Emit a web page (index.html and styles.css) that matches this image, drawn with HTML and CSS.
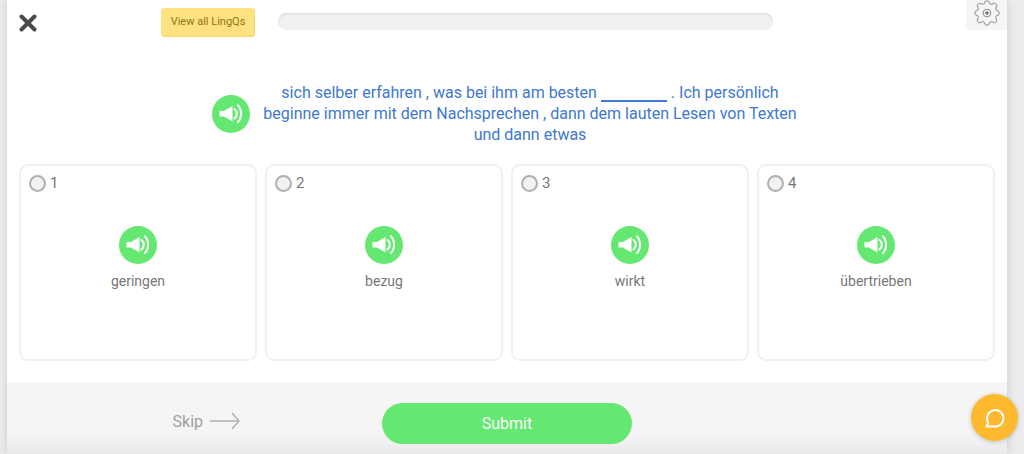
FILE: index.html
```html
<!DOCTYPE html>
<html lang="de">
<head>
  <meta charset="utf-8">
  <meta name="viewport" content="width=device-width, initial-scale=1">
  <title>LingQ Review</title>
  <link rel="stylesheet" href="styles.css">
</head>
<body>
  <svg class="sprite" aria-hidden="true">
    <symbol id="speaker" viewBox="0 0 38 38">
      <path fill="#fff" d="M7.500 16h4.500l8.500-5v15.500L12 21.500H7.500z"/>
      <path fill="none" stroke="#fff" stroke-width="2" stroke-linecap="round" d="M22.500 14q2.300 1.500 2.300 4.700t-2.300 4.700M25.800 10.300q3.200 3 3.200 8.400t-3.200 8.400"/>
    </symbol>
  </svg>

  <div class="review">
    <header class="topbar">
      <button class="close" type="button" aria-label="Close">
        <svg viewBox="0 0 18 18"><path d="M2.500 2.500l13 13M15.500 2.500l-13 13"/></svg>
      </button>
      <button class="view-all" type="button">View all LingQs</button>
      <div class="progress" role="progressbar" aria-label="Progress" aria-valuenow="0"></div>
      <button class="settings" type="button" aria-label="Settings">
        <svg viewBox="0 0 26 26">
          <path d="M10.500 3.500Q11 1 11.500 1h3q.5 0 1 2.500 1.500 1.500 3.500.3Q20.600 2.800 21 3.200l1.800 1.800q.4.400-.6 2-1.200 2 .3 3.500 2.500.5 2.500 1v3q0 .5-2.500 1-1.500 1.500-.3 3.500 1 1.600.6 2L21 22.800q-.4.400-2-.6-2-1.200-3.500.3-.5 2.500-1 2.500h-3q-.5 0-1-2.500Q9 21 7 22.200q-1.600 1-2 .6L3.200 21q-.4-.4.600-2 1.200-2-.3-3.500Q1 15 1 14.500v-3q0-.5 2.500-1Q5 9 3.800 7q-1-1.600-.6-2L5 3.200q.4-.4 2 .6 2 1.200 3.500-.3z"/>
          <circle cx="13" cy="13" r="3.800"/>
          <circle class="hub" cx="13" cy="13" r="1.300"/>
        </svg>
      </button>
    </header>

    <main>
      <div class="question">
        <button class="speak" type="button" aria-label="Play sentence"><svg><use href="#speaker"/></svg></button>
        <p>sich selber erfahren , was bei ihm am besten <span class="blank"></span> . Ich persönlich beginne immer mit dem Nachsprechen , dann dem lauten Lesen von Texten und dann etwas</p>
      </div>

      <div class="answers">
        <div class="answer">
          <label><input type="radio" name="answer" value="geringen">1</label>
          <button class="speak" type="button" aria-label="Play geringen"><svg><use href="#speaker"/></svg></button>
          <span class="word">geringen</span>
        </div>
        <div class="answer">
          <label><input type="radio" name="answer" value="bezug">2</label>
          <button class="speak" type="button" aria-label="Play bezug"><svg><use href="#speaker"/></svg></button>
          <span class="word">bezug</span>
        </div>
        <div class="answer">
          <label><input type="radio" name="answer" value="wirkt">3</label>
          <button class="speak" type="button" aria-label="Play wirkt"><svg><use href="#speaker"/></svg></button>
          <span class="word">wirkt</span>
        </div>
        <div class="answer">
          <label><input type="radio" name="answer" value="übertrieben">4</label>
          <button class="speak" type="button" aria-label="Play übertrieben"><svg><use href="#speaker"/></svg></button>
          <span class="word">übertrieben</span>
        </div>
      </div>
    </main>

    <footer class="actions">
      <a class="skip" href="#">Skip
        <svg viewBox="0 0 32 18"><path d="M1 9h29M23 1l7 8-7 8"/></svg>
      </a>
      <button class="submit" type="button">Submit</button>
    </footer>
  </div>

  <button class="chat" type="button" aria-label="Chat">
    <svg viewBox="0 0 20 20"><path d="M1.500 18.500l1.700-4A8.200 8.200 0 1 1 10.500 18.500z"/></svg>
  </button>
</body>
</html>
```

FILE: styles.css
```css
*, *::before, *::after {
  box-sizing: border-box;
}
body {
  margin: 0;
  background: #ececec;
  color: #777;
  font-family: Roboto, "Liberation Sans", sans-serif;
}
button {
  border: 0;
  padding: 0;
  background: none;
  font-family: inherit;
  cursor: pointer;
}
svg {
  display: block;
  fill: none;
}
.sprite {
  display: none;
}
.review {
  display: flex;
  flex-direction: column;
  min-height: 100vh;
  margin: 0 17px 0 7px;
  background: #fff;
  box-shadow: 0 0 8px rgba(0, 0, 0, 0.15);
}

/* Top bar */
.topbar {
  display: flex;
  align-items: flex-start;
}
.close {
  margin: 14px 124px 0 12px;
}
.close svg {
  width: 18px;
  height: 18px;
  stroke: #4a4a4a;
  stroke-width: 4;
  stroke-linecap: round;
}
.view-all {
  width: 94px;
  height: 29px;
  margin: 8px 23px 0 0;
  padding-bottom: 2px;
  border-radius: 4px;
  background: #fee281;
  box-shadow: inset -1px -1px 1px #f5d66b;
  color: #8f7218;
  font-size: 11px;
}
.progress {
  width: 495px;
  height: 17px;
  margin-top: 13px;
  border-radius: 9px;
  background: #f0f1f1;
  box-shadow: inset 0 1px 2px rgba(0, 0, 0, 0.12);
}
.settings {
  display: flex;
  justify-content: center;
  width: 41px;
  height: 30px;
  margin-left: auto;
  background: #f5f5f5;
}
.settings svg {
  width: 26px;
  height: 26px;
  stroke: #8a8a8a;
}
.settings .hub {
  fill: #555;
}

/* Question */
.question {
  display: flex;
  justify-content: center;
  align-items: center;
  gap: 8px;
  padding: 45px 12px 19px;
}
.question p {
  max-width: 544px;
  margin: 0;
  color: #4079cd;
  font-size: 16px;
  line-height: 21px;
  text-align: center;
}
.blank {
  display: inline-block;
  width: 66px;
  height: 12px;
  border-bottom: 2px solid #4079cd;
  vertical-align: -4px;
}
.speak {
  flex: none;
  width: 38px;
  height: 38px;
  border-radius: 50%;
  background: #64e871;
}
.speak svg {
  width: 38px;
  height: 38px;
}

/* Answers */
.answers {
  display: grid;
  grid-template-columns: repeat(4, 1fr);
  gap: 8px;
  padding: 0 12px;
}
.answer {
  display: flex;
  flex-direction: column;
  align-items: center;
  height: 197px;
  padding: 8px;
  border: 2px solid #f0f0f0;
  border-radius: 9px;
}
.answer label {
  display: flex;
  align-items: center;
  align-self: flex-start;
  gap: 4px;
  height: 18px;
  margin-bottom: 34px;
  font-size: 15px;
}
.answer input {
  appearance: none;
  width: 17px;
  height: 17px;
  margin: 0;
  border: 2px solid #b0b0b0;
  border-radius: 50%;
  background: #f0f1f1;
}
.answer input:checked {
  background: #64e871;
}
.word {
  margin-top: 8px;
  font-size: 14px;
  line-height: 18px;
}

/* Footer */
.actions {
  display: grid;
  grid-template-columns: 1fr 250px 1fr;
  align-items: start;
  flex: 1;
  margin-top: 21px;
  padding: 21px 0 10px;
  background: linear-gradient(to top, #e9e9e9, #f5f5f5 20px);
}
.skip {
  display: flex;
  align-items: center;
  justify-self: end;
  gap: 6px;
  height: 36px;
  margin-right: 141px;
  color: #a0a0a0;
  font-size: 16px;
  text-decoration: none;
}
.skip svg {
  width: 32px;
  height: 18px;
  stroke: #b0b0b0;
  stroke-width: 1.5;
}
.submit {
  height: 41px;
  border-radius: 21px;
  background: #64e871;
  color: #fff;
  font-size: 16px;
}

/* Chat bubble */
.chat {
  position: fixed;
  right: 6px;
  bottom: 13px;
  display: flex;
  justify-content: center;
  align-items: center;
  width: 47px;
  height: 47px;
  border-radius: 50%;
  background: #ffb92e;
  box-shadow: 0 1px 5px rgba(0, 0, 0, 0.2);
}
.chat svg {
  width: 20px;
  height: 20px;
  stroke: #fff;
  stroke-width: 2;
  stroke-linejoin: round;
}
```
